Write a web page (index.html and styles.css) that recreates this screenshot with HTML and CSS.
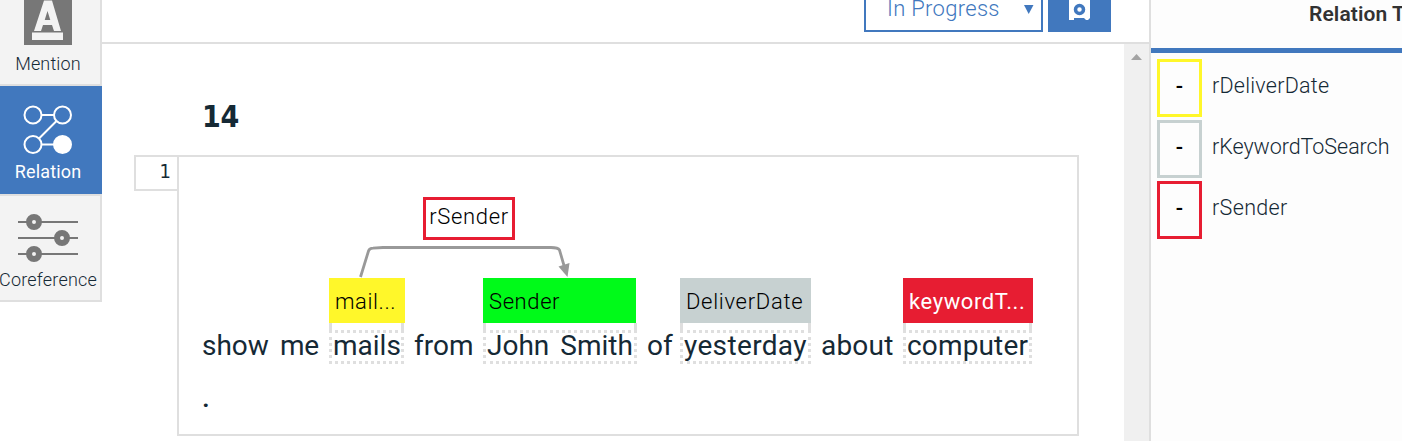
FILE: index.html
```html
<!DOCTYPE html>
<html lang="en">
<head>
<meta charset="utf-8">
<title>Relation annotation</title>
<link rel="stylesheet" href="styles.css">
</head>
<body>
<div class="app">
  <nav class="modes">
    <div class="mode mode-mention">
      <svg class="icon" width="48" height="48" viewBox="0 0 48 48"><path fill="#777" d="M0 0h48v48H0z"/><path fill="#f3f3f3" fill-rule="evenodd" d="M20 3.500h8L37 34h-7l-2-6h-9l-2 6h-7zM23.500 14l-2.800 9h5.600zM8 35.500h31v7.500H8z"/></svg>
      <span class="mode-name name-mention">Mention</span>
    </div>
    <div class="mode mode-relation">
      <svg class="icon" width="50" height="50" viewBox="0 0 50 50" fill="none" stroke="#fff" stroke-width="2"><circle cx="10" cy="10" r="8.500"/><circle cx="39.500" cy="10" r="8.500"/><circle cx="10" cy="39.500" r="8.500"/><circle cx="39.500" cy="39.500" r="8.500" fill="#fff"/><path d="M18.500 10H31M33.500 16L16 33.500M18.500 39.500H31"/></svg>
      <span class="mode-name name-relation">Relation</span>
    </div>
    <div class="mode mode-coreference">
      <svg class="icon" width="60" height="48" viewBox="0 0 60 48"><path stroke="#777" stroke-width="2" d="M0 8h60M0 24h60M0 40h60"/><g fill="#f3f3f3" stroke="#777" stroke-width="6"><circle cx="16" cy="8" r="5"/><circle cx="44" cy="24" r="5"/><circle cx="16" cy="40" r="5"/></g></svg>
      <span class="mode-name name-coreference">Coreference</span>
    </div>
  </nav>
  <main class="main">
    <header class="toolbar">
      <div class="status"><span class="status-text">In Progress</span><svg width="10" height="9" viewBox="0 0 10 9"><path fill="#4178be" d="M0 0h9.500L4.700 9z"/></svg></div>
      <div class="save"><svg width="21" height="20" viewBox="0 0 21 20"><path fill="#fff" d="M0 0h21v18l-2 2h-2l-2-2H5v2H0z"/><circle cx="10.500" cy="9.500" r="4" fill="#fff" stroke="#4178be" stroke-width="3.500"/></svg></div>
    </header>
    <div class="workspace">
      <div class="document">
        <h1 class="title">14</h1>
        <div class="row">
          <div class="line-number">1</div>
          <div class="editor">
            <svg class="arc" width="230" height="40" viewBox="0 0 230 40"><path fill="none" stroke="#999" stroke-width="2.800" d="M9.500 33L17.500 7Q18.500 4.200 22 4.200L32 3.500H200Q207 3.500 208.500 6L214 25"/><path fill="#999" d="M207.500 22.500l11-3.500-2 14z"/></svg>
            <div class="relation-label"><span>rSender</span></div>
            <div class="sentence">
              <span class="token t-show">show</span>
              <span class="token t-me">me</span>
              <span class="token mention t-mails"><span class="tag yellow"><span class="tag-mail">mail...</span></span>mails</span>
              <span class="token t-from">from</span>
              <span class="token mention t-john"><span class="tag green"><span class="tag-sender">Sender</span></span>John<span class="smith">Smith</span></span>
              <span class="token t-of">of</span>
              <span class="token mention t-yesterday"><span class="tag gray"><span class="tag-date">DeliverDate</span></span>yesterday</span>
              <span class="token t-about">about</span>
              <span class="token mention t-computer"><span class="tag red"><span class="tag-keyword">keywordT...</span></span>computer</span>
            </div>
            <div class="period">.</div>
          </div>
        </div>
      </div>
      <div class="scrollbar"><svg width="11" height="6" viewBox="0 0 11 6"><path fill="#a3a3a3" d="M0 6L5.500 0 11 6z"/></svg></div>
    </div>
  </main>
  <aside class="types">
    <div class="types-head">Relation Types</div>
    <div class="types-list">
      <div class="type"><span class="key key-yellow"><b>-</b></span><span class="type-date">rDeliverDate</span></div>
      <div class="type"><span class="key key-gray"><b>-</b></span><span class="type-search">rKeywordToSearch</span></div>
      <div class="type"><span class="key key-red"><b>-</b></span><span class="type-sender">rSender</span></div>
    </div>
  </aside>
</div>
</body>
</html>
```
FILE: styles.css
```css
* { box-sizing: border-box; }
body { margin: 0; background: #fff; color: #152935; font-family: Roboto, "Open Sans", sans-serif; overflow: hidden; }
svg { display: block; flex: none; }
.app { display: grid; grid-template-columns: 102px 1047px 253px; height: 441px; overflow: hidden; white-space: nowrap; }

.modes { display: flex; flex-direction: column; }
.mode { display: flex; flex-direction: column; align-items: center; background: #f3f3f3; border-right: 2px solid #dfdfdf; border-bottom: 2px solid #dfdfdf; padding-right: 4px; }
.mode-mention { height: 86px; overflow: hidden; }
.mode-mention .icon { margin-top: -3px; margin-bottom: 8px; }
.mode-relation { height: 108px; background: #4178be; border: 0; color: #fff; padding-top: 19px; padding-right: 6px; }
.mode-relation .icon { margin-bottom: 6px; }
.mode-coreference { height: 108px; border-top: 2px solid #dfdfdf; padding: 18px 4px 0 0; }
.mode-coreference .icon { margin-bottom: 7px; }
.mode-name { font-size: 18px; line-height: 22px; }
.name-mention { letter-spacing: .15px; font-weight: 300; }
.name-relation { letter-spacing: .15px; }
.name-coreference { letter-spacing: .2px; font-weight: 300; }

.main { display: flex; flex-direction: column; min-width: 0; }
.toolbar { height: 44px; border-bottom: 2px solid #dfdfdf; display: flex; justify-content: flex-end; align-items: flex-start; gap: 5px; padding-right: 38px; }
.status { width: 179px; height: 32px; border: 2px solid #4178be; border-top: 0; color: #4178be; display: flex; align-items: flex-start; justify-content: space-between; padding: 0 8px 0 21px; font-size: 22px; line-height: 18px; font-weight: 300; }
.status svg { margin-top: 5px; margin-right: -1px; }
.status-text { letter-spacing: .3px; }
.save { width: 63px; height: 32px; background: #4178be; display: flex; justify-content: center; }
.workspace { flex: 1; display: flex; min-height: 0; }
.document { flex: 1; padding: 52px 45px 0 32px; }
.title { margin: 0; padding-left: 68px; height: 59px; font-family: "DejaVu Sans Condensed", "DejaVu Sans", sans-serif; font-stretch: condensed; font-size: 30px; line-height: 42px; font-weight: 700; letter-spacing: -.4px; }
.row { display: flex; align-items: flex-start; }
.line-number { width: 43px; height: 36px; border: 2px solid #dfdfdf; border-right: 0; font-family: "DejaVu Sans Condensed", "DejaVu Sans", sans-serif; font-stretch: condensed; font-size: 20px; line-height: 29px; text-align: right; padding-right: 6px; }
.editor { position: relative; width: 902px; height: 281px; border: 2px solid #dfdfdf; padding: 40px 0 0 23px; }
.arc { position: absolute; left: 172px; top: 87px; }
.relation-label { width: 92px; height: 43px; margin-left: 221px; border: 3px solid #e71d32; color: #000; font-size: 22px; line-height: 34px; text-align: center; letter-spacing: .65px; font-weight: 300; }

.sentence { margin-top: 90px; height: 34px; display: flex; font-size: 28px; line-height: 34px; }
.token { display: block; flex: none; height: 34px; line-height: 31px; }
.t-show { width: 78px; } .t-me { width: 49px; letter-spacing: -.4px; } .t-from { width: 69px; }
.t-mails { width: 75px; margin-right: 10px; }
.t-john { width: 154px; margin-right: 10px; }
.t-of { width: 33px; }
.t-yesterday { width: 131px; margin-right: 10px; letter-spacing: .35px; }
.t-about { width: 82px; letter-spacing: .2px; } .t-computer { width: 129px; margin-right: 1px; letter-spacing: .15px; }
.mention { position: relative; border: 3px dotted #dfdfdf; line-height: 25px; padding-left: 1px; }
.mention::before { content: ""; position: absolute; left: -3px; right: -3px; top: -10px; height: 8px; border: solid #dfdfdf; border-width: 0 3px; }
.smith { margin-left: 11px; }
.tag { position: absolute; left: -3px; right: -3px; top: -55px; height: 45px; padding-left: 6px; font-size: 22px; line-height: 47px; color: #000; font-weight: 300; letter-spacing: .6px; }
.t-mails .tag, .t-computer .tag { right: -4px; }
.t-john .tag { right: -2px; }
.yellow { background: #fff72a; } .green { background: #00fa19; } .gray { background: #c7d1d1; letter-spacing: .7px; }
.red { background: #e71d32; color: #fff; font-weight: 400; }
.period { margin-top: 17px; height: 34px; font-size: 28px; line-height: 34px; font-weight: 500; }

.scrollbar { width: 25px; background: #f0f0f0; display: flex; justify-content: center; padding-top: 10px; }
.types { background: #fdfdfd; border-left: 2px solid #dfdfdf; overflow: hidden; }
.types-head { height: 53px; border-bottom: 5px solid #4178be; padding-left: 158px; font-size: 21px; line-height: 28px; font-weight: 600; color: #323232; letter-spacing: .1px; }
.types-list { padding: 6px 0 0 6px; display: flex; flex-direction: column; gap: 3px; font-size: 21.500px; font-weight: 300; letter-spacing: .25px; }
.type { display: flex; gap: 10px; height: 58px; line-height: 54px; }
.type-search { letter-spacing: -.05px; }
.type-sender { letter-spacing: .35px; }
.key { width: 45px; height: 58px; border: 3px solid; text-align: center; line-height: 50px; }
.key b { color: #000; font-weight: 500; }
.key-yellow { border-color: #fff72a; } .key-gray { border-color: #c7d1d1; } .key-red { border-color: #e71d32; }
```
